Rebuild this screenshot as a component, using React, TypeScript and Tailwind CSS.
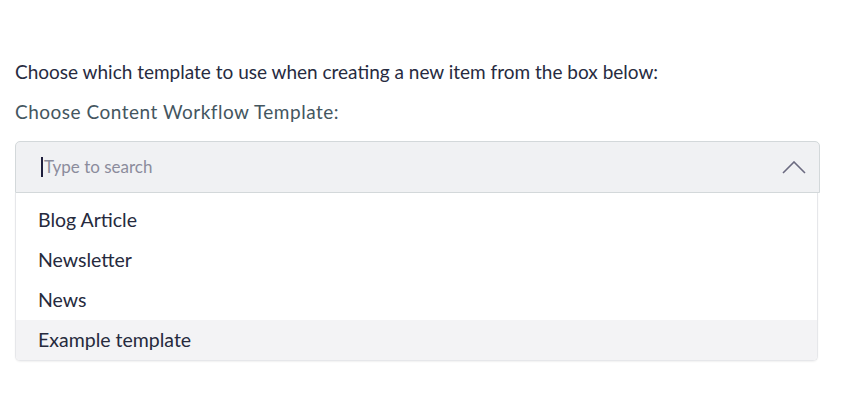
import React from 'react';

const items = ['Blog Article', 'Newsletter', 'News', 'Example template'];

const App: React.FC = () => {
  return (
    <div className="min-h-screen w-full bg-white px-[15px] pt-[60px] font-['Lato',sans-serif]">
      <p className="text-[19px] leading-6 text-[#272b3f]">
        Choose which template to use when creating a new item from the box below:
      </p>
      <label className="mt-[16px] block text-[19px] leading-6 tracking-[0.5px] text-[#44565f]">
        Choose Content Workflow Template:
      </label>

      {/* Combobox */}
      <div className="mt-[17px] w-[805px]">
        <div className="flex h-[52px] items-center rounded-t-[5px] border border-[#d3d8da] bg-[#f0f1f3] pl-[25px] pr-[13px]">
          <span className="mr-[1px] h-[20px] w-[2px] bg-[#1e1e3c]" />
          <span className="flex-1 text-[17px] text-[#8b8c9c]">Type to search</span>
          <svg width="24" height="13" viewBox="0 0 24 13" fill="none">
            <path d="M1 12 L12 1 L23 12" stroke="#6b6a80" strokeWidth="1.6" />
          </svg>
        </div>

        {/* Options */}
        <ul className="w-[803px] overflow-hidden rounded-b-[5px] border-x border-b border-[#e6e7ea] bg-white pt-[7px] shadow-[0_1px_2px_rgba(0,0,0,0.06)]">
          {items.map((item, i) => (
            <li
              key={item}
              className={`flex h-10 items-center pl-[22px] text-[19.5px] text-[#262a3d] ${
                i === items.length - 1 ? 'bg-[#f3f3f5]' : ''
              }`}
            >
              {item}
            </li>
          ))}
        </ul>
      </div>
    </div>
  );
};

export default App;
